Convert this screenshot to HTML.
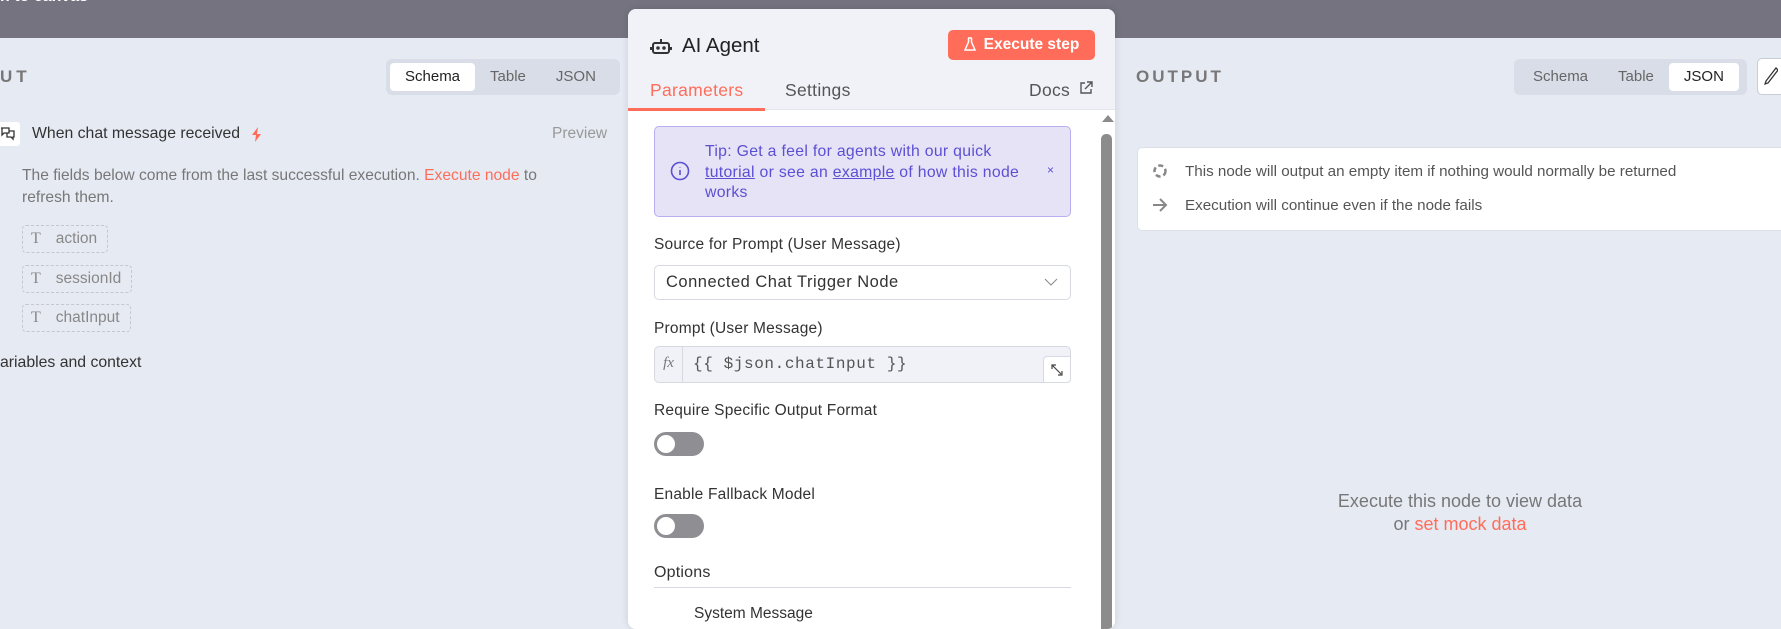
<!DOCTYPE html>
<html><head><meta charset="utf-8"><style>
*{box-sizing:border-box;margin:0;padding:0}
body{width:1781px;height:617px;overflow:hidden;background:#e6eaf3;font-family:"Liberation Sans",sans-serif;position:relative;color:#444}
.a{position:absolute;white-space:nowrap}
.top{position:absolute;left:0;top:0;width:1781px;height:38px;background:#75737f}
.grp{position:absolute;height:36px;background:#d9dde8;border-radius:6px;display:flex;align-items:center;padding:0 4px;font-size:15px;color:#666}
.grp span{padding:0 15px;height:28px;line-height:28px;border-radius:4px}
.grp .on{background:#fff;color:#222}
.pill{position:absolute;left:22px;height:28px;border:1px dashed #c4c7d0;border-radius:4px;font-size:15.5px;color:#888;line-height:26px;padding:0 10px 0 8px}
.pill b{font-weight:normal;font-family:"Liberation Serif",serif;margin-right:15px;font-size:16px}
.lbl{position:absolute;left:654px;font-size:15.5px;color:#333;letter-spacing:.2px}
.tog{position:absolute;left:654px;width:50px;height:24px;border-radius:12px;background:#8e8e93}
.tog:after{content:"";position:absolute;left:3px;top:3px;width:18px;height:18px;border-radius:50%;background:#fff}
</style></head><body>
<div class="top"></div>
<div class="a" style="left:0;top:-12px;font-size:16px;color:#fff;font-weight:bold">n to canvas</div>

<div class="a" style="left:0;top:67px;font-size:17px;letter-spacing:4px;color:#777;font-weight:bold">UT</div>
<div class="grp" style="left:386px;top:59px;width:234px"><span class="on">Schema</span><span>Table</span><span>JSON</span></div>
<div class="a" style="left:-2px;top:122px;width:22px;height:24px;background:#fff;border-radius:3px"></div>
<svg class="a" style="left:0;top:127px" width="16" height="14" viewBox="0 0 16 14" fill="none" stroke="#333" stroke-width="1.3"><path d="M1 1h8v5H4l-2 2V1M9 4h5v6h-1v2l-2-2H7V6"/></svg>
<div class="a" style="left:32px;top:125px;font-size:15.8px;color:#333">When chat message received</div>
<svg class="a" style="left:251px;top:127px" width="11" height="15" viewBox="0 0 11 15"><path d="M7 0L1 8h4l-1 7 6-8H6z" fill="#ff6d5a"/></svg>
<div class="a" style="left:552px;top:125px;font-size:15.5px;color:#999">Preview</div>
<div class="a" style="left:22px;top:165px;font-size:15.6px;color:#777;line-height:22px">The fields below come from the last successful execution. <span style="color:#ff6d5a">Execute node</span> to<br>refresh them.</div>
<div class="pill" style="top:225px"><b>T</b>action</div>
<div class="pill" style="top:265px"><b>T</b>sessionId</div>
<div class="pill" style="top:304px"><b>T</b>chatInput</div>
<div class="a" style="left:0;top:354px;font-size:15.8px;color:#333">ariables and context</div>

<div class="a" style="left:628px;top:9px;width:487px;height:620px;background:#fff;border-radius:8px;box-shadow:0 0 8px rgba(0,0,0,.12);overflow:hidden">
 <div style="position:absolute;left:0;top:0;width:487px;height:101px;background:#f0f2f8;border-bottom:1px solid #e4e6ee"></div>
 <svg style="position:absolute;left:22px;top:28px" width="22" height="18" viewBox="0 0 22 18" fill="none" stroke="#333" stroke-width="2"><rect x="3" y="6" width="16" height="10" rx="2"/><path d="M11 6V2M1 10v3M21 10v3"/><circle cx="8" cy="11" r=".8" fill="#333"/><circle cx="14" cy="11" r=".8" fill="#333"/></svg>
 <div style="position:absolute;left:54px;top:25px;font-size:20.5px;color:#222">AI Agent</div>
 <div style="position:absolute;left:320px;top:21px;width:147px;height:30px;background:#ff6d5a;border-radius:5px;color:#fff;font-weight:bold;font-size:15.5px;line-height:30px;text-align:center">
  <svg style="vertical-align:-2px;margin-right:8px" width="12" height="14" viewBox="0 0 12 14" fill="none" stroke="#fff" stroke-width="1.5"><path d="M4 1h4M4.5 1v4L1 13h10L7.5 5V1"/></svg>Execute step</div>
 <div style="position:absolute;left:22px;top:71px;font-size:17.5px;color:#ff6d5a;letter-spacing:.3px">Parameters</div>
 <div style="position:absolute;left:0;top:99px;width:137px;height:3px;background:#ff6d5a"></div>
 <div style="position:absolute;left:157px;top:71px;font-size:17.5px;color:#555;letter-spacing:.3px">Settings</div>
 <div style="position:absolute;left:401px;top:71px;font-size:17.5px;color:#555;letter-spacing:.3px">Docs</div>
 <svg style="position:absolute;left:451px;top:72px" width="14" height="14" viewBox="0 0 14 14" fill="none" stroke="#555" stroke-width="1.4"><path d="M6 2H2v10h10V8M8 1h5v5M13 1L6 8"/></svg>
 <div style="position:absolute;left:474px;top:106px;width:0;height:0;border:6px solid transparent;border-bottom:7px solid #8c8c8c;border-top:0"></div>
 <div style="position:absolute;left:473px;top:125px;width:11px;height:500px;background:#8c8c8c;border-radius:5px"></div>
</div>
<div class="a" style="left:654px;top:126px;width:417px;height:91px;background:#e6e3f7;border:1px solid #b8aef0;border-radius:5px"></div>
<svg class="a" style="left:670px;top:161px" width="20" height="20" viewBox="0 0 20 20" fill="none" stroke="#5b4fd3" stroke-width="1.6"><circle cx="10" cy="10" r="8.5"/><path d="M10 9v5M10 6v.5"/></svg>
<div class="a" style="left:705px;top:142px;font-size:15.8px;line-height:20.5px;color:#5b4fd3;letter-spacing:.3px">Tip: Get a feel for agents with our quick<br><u>tutorial</u> or see an <u>example</u> of how this node<br>works</div>
<div class="a" style="left:1047px;top:163px;font-size:12px;color:#5b4fd3">×</div>
<div class="lbl" style="top:236px">Source for Prompt (User Message)</div>
<div class="a" style="left:654px;top:265px;width:417px;height:35px;border:1px solid #d6d9e0;border-radius:5px;background:#fff;font-size:16.5px;letter-spacing:.5px;color:#333;line-height:33px;padding-left:11px">Connected Chat Trigger Node<svg style="position:absolute;right:12px;top:12px" width="14" height="8" viewBox="0 0 14 8" fill="none" stroke="#888"><path d="M1 1l6 6 6-6"/></svg></div>
<div class="lbl" style="top:320px">Prompt (User Message)</div>
<div class="a" style="left:654px;top:346px;width:417px;height:37px;border:1px solid #d6d9e0;border-radius:5px;background:#f0f2f8"></div>
<div class="a" style="left:655px;top:347px;width:28px;height:35px;border-right:1px solid #d6d9e0;font-family:'Liberation Serif',serif;font-style:italic;color:#777;font-size:15px;line-height:33px;text-align:center">fx</div>
<div class="a" style="left:693px;top:355px;font-family:'Liberation Mono',monospace;font-size:16px;letter-spacing:.6px;color:#555">{{ $json.chatInput }}</div>
<div class="a" style="left:1043px;top:356px;width:28px;height:27px;background:#fff;border:1px solid #d6d9e0;border-radius:4px 0 4px 0"></div>
<svg class="a" style="left:1051px;top:364px" width="12" height="12" viewBox="0 0 12 12" fill="none" stroke="#444" stroke-width="1.2"><path d="M1 5V1h4M1 1l9 9M11 7v4H7"/></svg>
<div class="lbl" style="top:402px">Require Specific Output Format</div>
<div class="tog" style="top:432px"></div>
<div class="lbl" style="top:486px">Enable Fallback Model</div>
<div class="tog" style="top:514px"></div>
<div class="lbl" style="top:564px;font-size:16px">Options</div>
<div class="a" style="left:654px;top:587px;width:417px;height:1px;background:#d6d9e0"></div>
<div class="a" style="left:694px;top:605px;font-size:15.5px;color:#333">System Message</div>

<div class="a" style="left:1136px;top:67px;font-size:17px;letter-spacing:3px;color:#777;font-weight:bold">OUTPUT</div>
<div class="grp" style="left:1514px;top:59px;width:233px"><span>Schema</span><span>Table</span><span class="on">JSON</span></div>
<div class="a" style="left:1757px;top:58px;width:40px;height:37px;border:1px solid #c9ccd4;border-radius:5px;background:#fff"></div>
<svg class="a" style="left:1764px;top:66px" width="14" height="20" viewBox="0 0 14 20" fill="none" stroke="#333" stroke-width="1.3"><path d="M12 2l2 2-10 13-3 1 1-3z"/></svg>
<div class="a" style="left:1137px;top:147px;width:660px;height:84px;background:#fff;border:1px solid #dcdfe6;border-radius:5px"></div>
<svg class="a" style="left:1152px;top:163px" width="16" height="16" viewBox="0 0 16 16" fill="none" stroke="#888" stroke-width="2.5" stroke-dasharray="5 3"><circle cx="8" cy="8" r="5.5"/></svg>
<div class="a" style="left:1185px;top:163px;font-size:15.2px;color:#555">This node will output an empty item if nothing would normally be returned</div>
<svg class="a" style="left:1152px;top:198px" width="16" height="14" viewBox="0 0 16 14" fill="none" stroke="#888" stroke-width="2"><path d="M1 7h13M8 1l6 6-6 6"/></svg>
<div class="a" style="left:1185px;top:197px;font-size:15.2px;color:#555">Execution will continue even if the node fails</div>
<div class="a" style="left:1260px;top:490px;width:400px;text-align:center;font-size:18px;color:#777;line-height:23px">Execute this node to view data<br>or <span style="color:#ff6d5a">set mock data</span></div>
</body></html>
